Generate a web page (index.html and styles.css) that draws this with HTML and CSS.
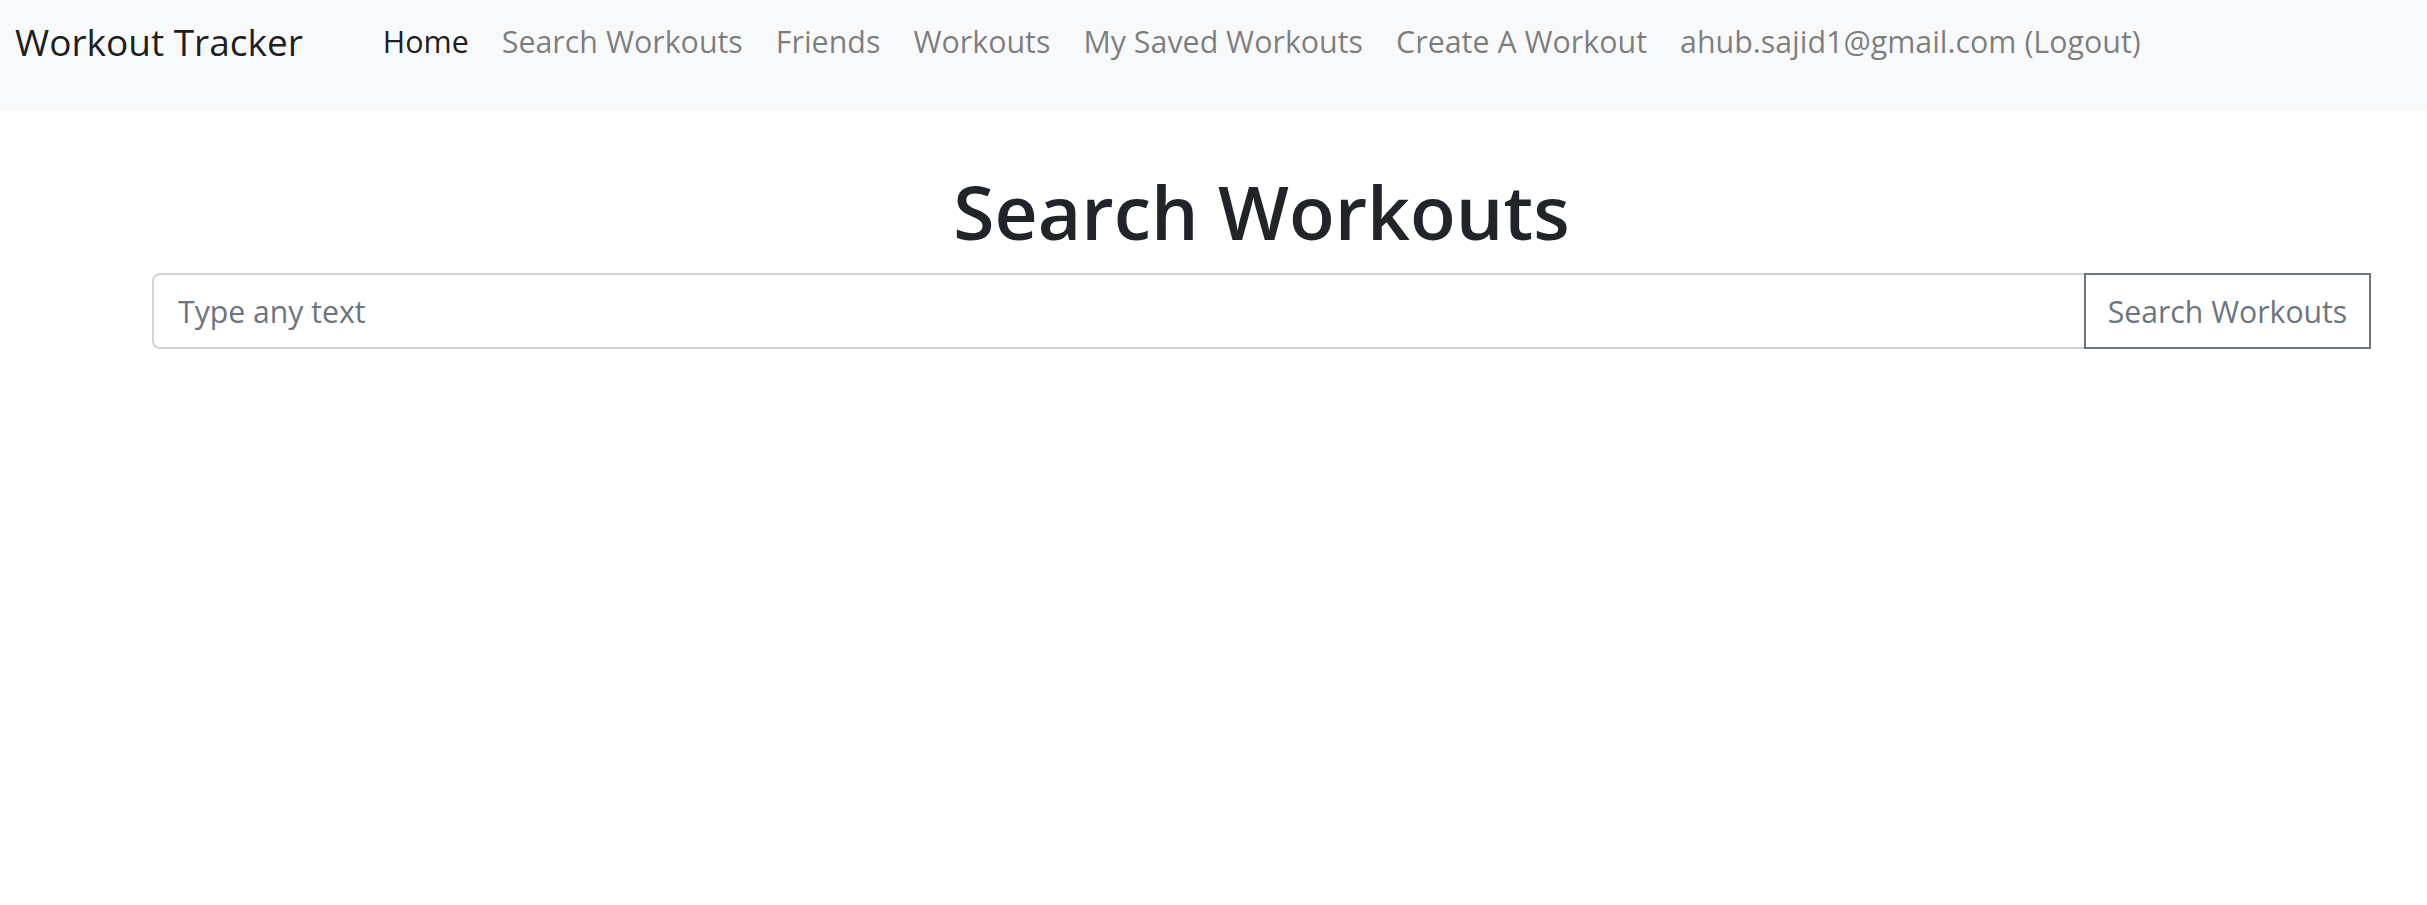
FILE: index.html
```html
<!DOCTYPE html>
<html lang="en">
<head>
<meta charset="utf-8">
<title>Workout Tracker</title>
<link rel="stylesheet" href="styles.css">
</head>
<body>
<nav class="navbar">
  <a class="brand" href="#">Workout Tracker</a>
  <ul class="nav">
    <li><a class="nav-link active" href="#">Home</a></li>
    <li><a class="nav-link" href="#">Search Workouts</a></li>
    <li><a class="nav-link" href="#">Friends</a></li>
    <li><a class="nav-link" href="#">Workouts</a></li>
    <li><a class="nav-link" href="#">My Saved Workouts</a></li>
    <li><a class="nav-link" href="#">Create A Workout</a></li>
    <li><a class="nav-link" href="#">ahub.sajid1@gmail.com (Logout)</a></li>
  </ul>
</nav>
<main class="content">
  <h1 class="title">Search Workouts</h1>
  <form class="search-group">
    <input class="search-input" type="text" placeholder="Type any text">
    <button class="search-btn" type="button">Search Workouts</button>
  </form>
</main>
</body>
</html>
```
FILE: styles.css
```css
* { box-sizing: border-box; }
html, body { margin: 0; padding: 0; }
body {
  font-family: "Open Sans", "Noto Sans", sans-serif;
  color: #212529;
  background: #fff;
  font-size: 30px;
}
.navbar {
  display: flex;
  align-items: flex-start;
  background: #f8f9fa;
  height: 111px;
  padding: 12px 15px 0;
}
.brand {
  font-size: 37px;
  line-height: 60px;
  color: rgba(0,0,0,0.9);
  text-decoration: none;
  margin-right: 80px;
}
.nav {
  display: flex;
  list-style: none;
  margin: 0;
  padding: 0;
  gap: 33px;
}
.nav-link {
  display: block;
  font-size: 30.4px;
  line-height: 60px;
  color: rgba(0,0,0,0.5);
  text-decoration: none;
}
.nav-link.active { color: rgba(0,0,0,0.9); }
.content {
  padding: 0 56px 0 152px;
}
.title {
  margin: 0;
  padding-top: 52px;
  font-size: 75px;
  font-weight: 600;
  line-height: 96px;
  text-align: center;
  color: #212529;
  margin-bottom: 14px;
}
.search-group {
  display: flex;
  margin: 0;
}
.search-input {
  flex: 1;
  height: 76px;
  border: 2px solid #ced4da;
  border-right: none;
  border-radius: 8px 0 0 8px;
  padding: 0 24px;
  font-family: inherit;
  font-size: 30.2px;
  color: #495057;
  outline: none;
}
.search-input::placeholder { color: #6c757d; }
.search-btn {
  width: 287px;
  height: 76px;
  border: 2px solid #6c757d;
  background: #fff;
  color: #6c757d;
  font-family: inherit;
  font-size: 30.2px;
  padding: 0;
  border-radius: 0;
}
```
